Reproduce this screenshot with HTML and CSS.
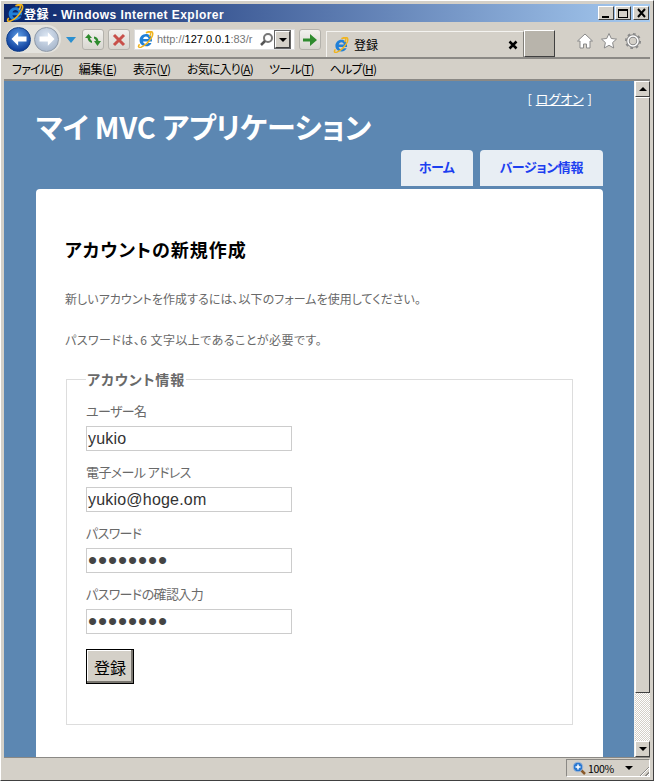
FILE: index.html
```html
<!DOCTYPE html>
<html lang="ja">
<head>
<meta charset="utf-8">
<title>登録</title>
<link rel="stylesheet" href="styles.css">
</head>
<body>
<svg class="defs" width="0" height="0" aria-hidden="true">
  <defs>
    <symbol id="ie" viewBox="0 0 20 20">
      <path d="M10.500 3.500C6.500 3.500 3 6.800 3 11s3.200 7 7.500 7c3.200 0 5.500-1.600 6.500-4h-4c-.6 1-1.500 1.400-2.500 1.400-1.800 0-3.200-1.200-3.400-3H17.500c.1-.5.100-1 .1-1.500 0-4.500-3-7.400-7.100-7.400zM7.200 9.500c.3-1.700 1.600-2.900 3.300-2.900s3 1.200 3.100 2.900z" fill="#2080d8"/>
      <path d="M3 15.500C.6 18.500 2 20 5 19c4-1.600 9-6 12.500-12 1.500-3 1.500-6-1-6.500-2-.4-4 .5-6 1.500 2.500-.8 5-1.300 5.500.2.400 1.300-.6 3-1.500 4.300" fill="none" stroke="#f0b41e" stroke-width="1.800"/>
    </symbol>
    <symbol id="arrow" viewBox="0 0 24 24">
      <path d="M3 12l8-8v5h10v6H11v5z" fill="currentColor"/>
    </symbol>
  </defs>
</svg>
<div class="window">
  <header class="titlebar">
    <svg class="title-ie"><use href="#ie"/></svg>
    <span class="title-text">登録 - Windows Internet Explorer</span>
    <div class="win-buttons">
      <span class="win-btn"><i class="g-min"></i></span>
      <span class="win-btn"><i class="g-max"></i></span>
      <span class="win-btn win-close"><svg width="11" height="10" viewBox="0 0 11 10"><path d="M2 1l7 8M9 1l-7 8" stroke="#000" stroke-width="2"/></svg></span>
    </div>
  </header>

  <div class="toolbar">
    <div class="nav-pill">
      <span class="nav-btn nav-back"><svg width="20" height="20"><use href="#arrow"/></svg></span>
      <span class="nav-btn nav-forward"><svg width="20" height="20" class="flip"><use href="#arrow"/></svg></span>
    </div>
    <span class="nav-drop"></span>
    <span class="tool-btn refresh">
      <svg width="18" height="16" viewBox="0 0 18 16"><path d="M1 6l3.500-4L8 6H6c.3 1.500 1 2.300 2 3v2C5.500 10.500 3.800 8.500 3.500 6zM17 9l-3.500 5L10 9h2c-.2-1.200-.8-2-2-2.500V4.500c2.700.5 4.300 2.200 4.500 4.500z" fill="#2e8b2e"/></svg>
    </span>
    <span class="tool-btn stop">
      <svg width="14" height="14" viewBox="0 0 14 14"><path d="M2 2l10 10M12 2L2 12" stroke="#c8504a" stroke-width="3"/></svg>
    </span>
    <div class="address">
      <svg class="addr-ie"><use href="#ie"/></svg>
      <span class="addr-url"><span class="dim">http://</span>127.0.0.1<span class="dim">:83/</span><span class="dim">r</span></span>
      <svg class="addr-search" width="15" height="15" viewBox="0 0 15 15"><circle cx="9" cy="6" r="4" fill="none" stroke="#777" stroke-width="2"/><path d="M6 9l-4 4" stroke="#555" stroke-width="2.500"/></svg>
      <span class="addr-drop"><i></i></span>
    </div>
    <span class="tool-btn go">
      <svg width="16" height="14" viewBox="0 0 16 14"><path d="M1 5.500h7V1l7 6-7 6V8.500H1z" fill="#2e8b2e"/></svg>
    </span>
    <div class="tab">
      <svg class="tab-ie"><use href="#ie"/></svg>
      <span class="tab-label">登録</span>
      <svg class="tab-close" width="10" height="10" viewBox="0 0 10 10"><path d="M1.500 1.500l7 7M8.500 1.500l-7 7" stroke="#000" stroke-width="2.500"/></svg>
    </div>
    <span class="new-tab"></span>
    <div class="cmd-icons">
      <svg width="18" height="18" viewBox="0 0 18 18"><path d="M9 2L1.500 9H4v7h3.500v-4h3v4H14V9h2.500z" fill="#fff" stroke="#8a8a8a"/></svg>
      <svg width="18" height="18" viewBox="0 0 18 18"><path d="M9 1.500l2.300 5 5.200.6-3.900 3.500 1.100 5.400L9 13.300 4.300 16l1.100-5.400L1.500 7.100l5.200-.6z" fill="#fff" stroke="#8a8a8a"/></svg>
      <svg width="18" height="18" viewBox="0 0 18 18"><circle cx="9" cy="9" r="5" fill="none" stroke="#8a8a8a" stroke-width="3.500"/><circle cx="9" cy="9" r="6.800" fill="none" stroke="#8a8a8a" stroke-width="2.500" stroke-dasharray="2.600 2.700"/><circle cx="9" cy="9" r="5" fill="none" stroke="#fff" stroke-width="1.500"/></svg>
    </div>
  </div>

  <nav class="menubar">
    <span>ファイル(<u>F</u>)</span>
    <span class="kanji">編集(<u>E</u>)</span>
    <span class="kanji">表示(<u>V</u>)</span>
    <span>お気に入り(<u>A</u>)</span>
    <span>ツール(<u>T</u>)</span>
    <span>ヘルプ(<u>H</u>)</span>
  </nav>

  <div class="viewport">
    <div class="page">
      <div class="login">[ <a href="#">ログオン</a> ]</div>
      <h1 class="site-title">マイ MVC アプリケーション</h1>
      <ul class="tabs">
        <li><a href="#">ホーム</a></li>
        <li><a href="#">バージョン情報</a></li>
      </ul>
      <main class="main">
        <h2 class="heading">アカウントの新規作成</h2>
        <p class="note">新しいアカウントを作成するには、以下のフォームを使用してください。</p>
        <p class="note note-wide">パスワードは、6 文字以上であることが必要です。</p>
        <fieldset class="account">
          <legend>アカウント情報</legend>
          <label class="field"><span>ユーザー名</span><input type="text" value="yukio"></label>
          <label class="field"><span>電子メール アドレス</span><input type="text" value="yukio@hoge.om"></label>
          <label class="field"><span>パスワード</span><input type="password" class="secret" value="12345678"></label>
          <label class="field"><span>パスワードの確認入力</span><input type="password" class="secret" value="12345678"></label>
          <button type="button" class="submit">登録</button>
        </fieldset>
      </main>
    </div>
    <div class="scrollbar">
      <span class="sb-btn"><i class="up"></i></span>
      <span class="sb-thumb"></span>
      <span class="sb-track"></span>
      <span class="sb-btn"><i class="down"></i></span>
    </div>
  </div>

  <footer class="statusbar">
    <div class="zoom">
      <svg width="14" height="14" viewBox="0 0 14 14"><path d="M8 8l5 5" stroke="#8a5a2a" stroke-width="2.500"/><circle cx="6" cy="6" r="4.800" fill="#2a78d0" stroke="#a0b8d8"/><path d="M3.500 6h5M6 3.500v5" stroke="#fff" stroke-width="1.500"/></svg>
      <span class="zoom-val">100%</span>
      <i class="zoom-drop"></i>
      <span class="grip"></span>
    </div>
  </footer>
</div>
</body>
</html>
```
FILE: styles.css
```css
* { box-sizing: border-box; }
html, body { margin: 0; padding: 0; }
body { width: 654px; height: 781px; overflow: hidden; background: #d4d0c8; font-family: "Noto Sans CJK JP", "Liberation Sans", sans-serif; font-feature-settings: "palt"; }
.defs { position: absolute; }
.window { width: 654px; height: 781px; display: flex; flex-direction: column; background: #d4d0c8; border-right: 1px solid #404040; border-bottom: 1px solid #404040; border-top: 1px solid #fff; border-left: 1px solid #fff; padding: 3px; }

.titlebar { height: 18px; flex: none; display: flex; align-items: center; background: linear-gradient(90deg, #0a246a 0%, #a6caf0 100%); }
.title-ie { width: 18px; height: 18px; margin-left: 2px; flex: none; }
.title-text { color: #fff; font: bold 12px "Liberation Sans", "Noto Sans CJK JP", sans-serif; letter-spacing: .45px; white-space: nowrap; }
.win-buttons { margin-left: auto; margin-right: 1px; display: flex; }
.win-btn { width: 16px; height: 14px; margin-left: 1px; display: flex; align-items: center; justify-content: center; background: #d4d0c8; border: 1px solid; border-color: #fff #404040 #404040 #fff; }
.win-close { margin-left: 2px; }
.g-min { width: 7px; height: 2px; background: #000; margin-top: 7px; margin-right: 2px; }
.g-max { width: 10px; height: 9px; border: 1px solid #000; border-top-width: 2px; }

.toolbar { height: 37px; flex: none; display: flex; align-items: flex-start; border-bottom: 2px solid #8b8985; }
.nav-pill { width: 55px; height: 28px; margin: 3px 0 0 2px; display: flex; align-items: center; gap: 3px; background: #e4e3de; border-radius: 14px; flex: none; }
.nav-btn { width: 25px; height: 25px; border-radius: 50%; display: flex; align-items: center; justify-content: center; flex: none; }
.nav-back { background: radial-gradient(circle at 50% 35%, #5d9ee6, #0f3f9c 75%); color: #fff; border: 1px solid #123f86; }
.nav-forward { background: radial-gradient(circle at 50% 35%, #dce7f4, #a7b6cb 80%); color: #fff; border: 1px solid #8f9aa8; }
.flip { transform: scaleX(-1); }
.nav-drop { width: 0; height: 0; margin: 15px 0 0 5px; border: 5px solid transparent; border-top: 6px solid #2a8fd0; border-bottom: 0; flex: none; }
.tool-btn { height: 21px; width: 22px; display: flex; align-items: center; justify-content: center; background: linear-gradient(#f2f1ee, #d8d6d0); border: 1px solid #b4b2ac; border-radius: 3px; flex: none; margin-top: 7px; }
.refresh { margin-left: 6px; }
.stop { margin-left: 4px; }
.address { width: 161px; height: 21px; margin: 7px 0 0 4px; display: flex; align-items: center; background: #fff; border: 1px solid #ddd; flex: none; }
.addr-ie { width: 17px; height: 17px; margin-left: 2px; flex: none; }
.addr-url { margin-left: 3px; font: 11px/1 "Liberation Sans", sans-serif; white-space: nowrap; width: 102px; overflow: hidden; color: #000; }
.dim { color: #777; }
.addr-search { flex: none; }
.addr-drop { width: 15px; height: 17px; margin-left: 1px; background: #d4d0c8; border: 1px solid; border-color: #fff #404040 #404040 #fff; outline: 1px solid #666; display: flex; align-items: center; justify-content: center; flex: none; }
.addr-drop i { border: 4px solid transparent; border-top: 4px solid #000; border-bottom: 0; }
.go { margin-left: 4px; }
.tab { width: 198px; height: 26px; margin: 9px 0 0 5px; display: flex; align-items: center; border: 1px solid #f4f3f0; border-bottom: 0; border-right-color: #807e78; flex: none; }
.tab-ie { width: 16px; height: 16px; margin-left: 6px; flex: none; }
.tab-label { margin-left: 5px; font-size: 12px; color: #000; }
.tab-close { margin-left: auto; margin-right: 5px; }
.new-tab { width: 31px; height: 27px; margin: 8px 0 0; background: #b8b4ab; border: 1px solid; border-color: #fff #404040 #404040 #fff; flex: none; }
.cmd-icons { display: flex; gap: 6px; margin: 10px 0 0 21px; flex: none; }

.menubar { height: 22px; flex: none; display: flex; align-items: center; gap: 16px; padding: 0 0 1px 8px; color: #000; border-bottom: 2px solid #8b8985; white-space: nowrap; }
.menubar span { font-size: 12px; letter-spacing: -.8px; }
.menubar .kanji { letter-spacing: -.2px; }
.menubar u { text-underline-offset: 1px; }

.viewport { flex: 1; min-height: 0; display: flex; }
.page { flex: 1; min-width: 0; background: #5c87b2; overflow: hidden; padding: 8px 31px 0 32px; }
.login { text-align: right; padding-right: 11px; height: 20px; color: #fff; font-size: 13px; line-height: 20px; word-spacing: 1px; }
.login a { color: #fff; }
.site-title { margin: 1px 0 0; font-size: 29px; line-height: 32px; font-weight: 700; color: #fff; letter-spacing: -.2px; white-space: nowrap; }
.tabs { list-style: none; margin: 8px 0 0; padding: 0; display: flex; justify-content: flex-end; gap: 7px; height: 39px; }
.tabs li { height: 36px; background: #e8eef4; border-radius: 4px 4px 0 0; }
.tabs a { display: block; line-height: 34px; padding: 0 20px; color: #1c3ff0; font-size: 13px; font-weight: 700; letter-spacing: -.4px; text-decoration: none; }
.tabs li:first-child a { padding: 0 18px; }
.main { background: #fff; border-radius: 4px 4px 0 0; height: 600px; padding: 47px 30px 0 29px; }
.heading { margin: 0; font-size: 18px; line-height: 26px; font-weight: 700; color: #000; letter-spacing: 1px; }
.note { margin: 0; color: #696969; font-size: 12px; line-height: 20px; letter-spacing: .05px; }
.heading + .note { margin-top: 27px; }
.note + .note { margin-top: 21px; }
.note-wide { letter-spacing: .45px; }
.account { margin: 19px 0 0 1px; padding: 0 0 0 19px; border: 1px solid #ddd; height: 356px; width: 507px; min-width: 0; }
.account legend { padding: 0 1px; font-size: 14px; line-height: 20px; font-weight: 700; color: #696969; letter-spacing: .9px; }
.field { display: block; width: 206px; height: 61px; color: #696969; }
.account legend + .field { margin-top: 14px; }
.field span { display: block; font-size: 13px; line-height: 16px; height: 23px; letter-spacing: -.6px; }
.field input { display: block; width: 206px; height: 25px; padding: 0 1px; margin: 0; border: 1px solid #ccc; font: 16px "Liberation Sans", sans-serif; letter-spacing: .2px; color: #333; background: #fff; outline: 0; }
.field .secret { font-size: 26px; letter-spacing: .9px; color: #444; }
.submit { display: block; margin-top: 2px; width: 48px; height: 35px; padding: 0; background: #d4d0c8; border: 1px solid #000; box-shadow: inset -2px -2px 0 #7a7770, inset 1px 1px 0 #fff; font: 16px "Noto Sans CJK JP", sans-serif; color: #000; }

.scrollbar { width: 16px; flex: none; display: flex; flex-direction: column; background: #d4d0c8; border-left: 1px solid #f4f3f0; }
.sb-btn { height: 16px; flex: none; display: flex; align-items: center; justify-content: center; background: #d4d0c8; border: 1px solid; border-color: #fff #404040 #404040 #fff; }
.sb-btn .up { border: 4px solid transparent; border-bottom: 4px solid #000; border-top: 0; }
.sb-btn .down { border: 4px solid transparent; border-top: 4px solid #000; border-bottom: 0; }
.sb-thumb { height: 596px; flex: none; background: #d4d0c8; border: 1px solid; border-color: #fff #404040 #404040 #fff; }
.sb-track { flex: 1; background: repeating-conic-gradient(#d4d0c8 0 25%, #fff 0 50%) 0 0 / 2px 2px; }

.statusbar { height: 20px; flex: none; display: flex; justify-content: flex-end; align-items: flex-start; padding-top: 1px; border-top: 1px solid #8b8985; }
.zoom { width: 84px; height: 18px; display: flex; align-items: center; border: 1px solid; border-color: #8b8985 #fff #fff #8b8985; padding-left: 5px; position: relative; }
.zoom-val { margin-left: 2px; font-size: 10.500px; letter-spacing: -.3px; color: #000; }
.zoom-drop { margin-left: 11px; border: 4px solid transparent; border-top: 4px solid #000; border-bottom: 0; }
.grip { position: absolute; right: 0; bottom: 0; width: 12px; height: 12px; background: repeating-linear-gradient(135deg, transparent 0 2px, #8b8985 2px 3px, #fff 3px 4px); clip-path: polygon(100% 0, 100% 100%, 0 100%); }
```
